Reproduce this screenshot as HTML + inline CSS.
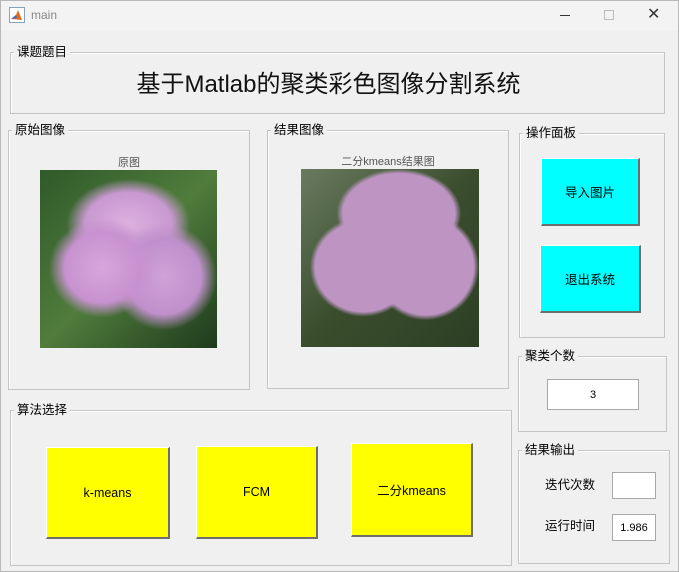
<!DOCTYPE html>
<html><head><meta charset="utf-8"><style>
*{margin:0;padding:0;box-sizing:border-box}
body{width:679px;height:572px;background:#f0f0f0;font-family:"Liberation Sans","Noto Sans CJK SC",sans-serif;position:relative;overflow:hidden}
.fr{position:absolute;left:0;top:0;width:679px;height:572px;border:1px solid #b8b8b8;pointer-events:none}
.tb{position:absolute;left:0;top:0;width:679px;height:31px;background:#f3f3f3}
.p{position:absolute;border:1px solid #c4c4c4;box-shadow:inset 1px 1px 0 #fff}
.lg{position:absolute;top:-9px;left:3px;background:#f0f0f0;padding:0 3px;font-size:12.5px;color:#000;line-height:16px}
.a{position:absolute}
.btn{position:absolute;border:1px solid #fff;border-right:2px solid #6d6d6d;border-bottom:2px solid #6d6d6d;display:flex;align-items:center;justify-content:center;font-size:12.5px}
.cy{background:#0ff}.ye{background:#ff0}
.in{position:absolute;background:#fff;border:1px solid #a8a8a8;display:flex;align-items:center;justify-content:center;font-size:11px}
</style></head><body>
<div class="tb">
<svg class="a" style="left:9px;top:7px" width="16" height="16"><rect x="0.5" y="0.5" width="15" height="15" fill="#fff" stroke="#8aa0c0"/><path d="M2 12 L7 8 L9 3 L13 13 Z" fill="#e06a1b"/><path d="M2 12 L7 8 L8 11Z" fill="#3a6fc4"/></svg>
<div class="a" style="left:31px;top:8px;font-size:12px;color:#888">main</div>
<div class="a" style="left:560px;top:15px;width:10px;height:1px;background:#333"></div>
<div class="a" style="left:604px;top:10px;width:10px;height:10px;border:1px solid #bbb"></div>
<div class="a" style="left:647px;top:4px;font-size:16px;color:#333">✕</div>
</div>
<div class="p" style="left:10px;top:52px;width:655px;height:62px"><div class="lg">课题题目</div>
<div class="a" style="left:-18px;right:0;top:11px;text-align:center;font-size:24px;color:#111">基于Matlab的聚类彩色图像分割系统</div></div>

<div class="p" style="left:8px;top:130px;width:242px;height:260px"><div class="lg">原始图像</div>
<div class="a" style="left:0;width:240px;top:23px;text-align:center;font-size:11px;color:#555">原图</div>
<div class="a" style="left:31px;top:39px;width:177px;height:178px;background:radial-gradient(ellipse 30% 28% at 35% 55%,#d8a6dc 0,#c792cf 70%,transparent 100%),radial-gradient(ellipse 30% 30% at 70% 60%,#d0a0d8 0,#c090cc 70%,transparent 100%),radial-gradient(ellipse 35% 25% at 50% 30%,#dcb0e0 0,#c898d0 70%,transparent 100%),linear-gradient(135deg,#2f5a2a,#507c3c 50%,#1e3a1c)"></div></div>

<div class="p" style="left:267px;top:130px;width:242px;height:259px"><div class="lg">结果图像</div>
<div class="a" style="left:0;width:240px;top:22px;text-align:center;font-size:11px;color:#555">二分kmeans结果图</div>
<div class="a" style="left:33px;top:38px;width:178px;height:178px;background:radial-gradient(ellipse 30% 28% at 35% 55%,#bd94c2 0,#bd94c2 90%,transparent 100%),radial-gradient(ellipse 30% 30% at 70% 55%,#bd94c2 0,#bd94c2 90%,transparent 100%),radial-gradient(ellipse 35% 25% at 55% 25%,#bd94c2 0,#bd94c2 90%,transparent 100%),linear-gradient(135deg,#6a7a60,#3a4e2e 50%,#2c3f24)"></div></div>

<div class="p" style="left:519px;top:133px;width:146px;height:205px"><div class="lg">操作面板</div></div>
<div class="btn cy" style="left:541px;top:158px;width:99px;height:68px">导入图片</div>
<div class="btn cy" style="left:540px;top:245px;width:101px;height:68px">退出系统</div>

<div class="p" style="left:518px;top:356px;width:149px;height:76px"><div class="lg">聚类个数</div></div>
<div class="in" style="left:547px;top:379px;width:92px;height:31px">3</div>

<div class="p" style="left:518px;top:450px;width:152px;height:114px"><div class="lg">结果输出</div></div>
<div class="a" style="left:545px;top:474px;font-size:12.5px">迭代次数</div>
<div class="in" style="left:612px;top:472px;width:44px;height:27px"></div>
<div class="a" style="left:545px;top:515px;font-size:12.5px">运行时间</div>
<div class="in" style="left:612px;top:514px;width:44px;height:27px">1.986</div>

<div class="p" style="left:10px;top:410px;width:502px;height:156px"><div class="lg">算法选择</div></div>
<div class="btn ye" style="left:46px;top:447px;width:124px;height:92px">k-means</div>
<div class="btn ye" style="left:196px;top:446px;width:122px;height:93px">FCM</div>
<div class="btn ye" style="left:351px;top:443px;width:122px;height:94px">二分kmeans</div>
<div class="fr"></div>
</body></html>
